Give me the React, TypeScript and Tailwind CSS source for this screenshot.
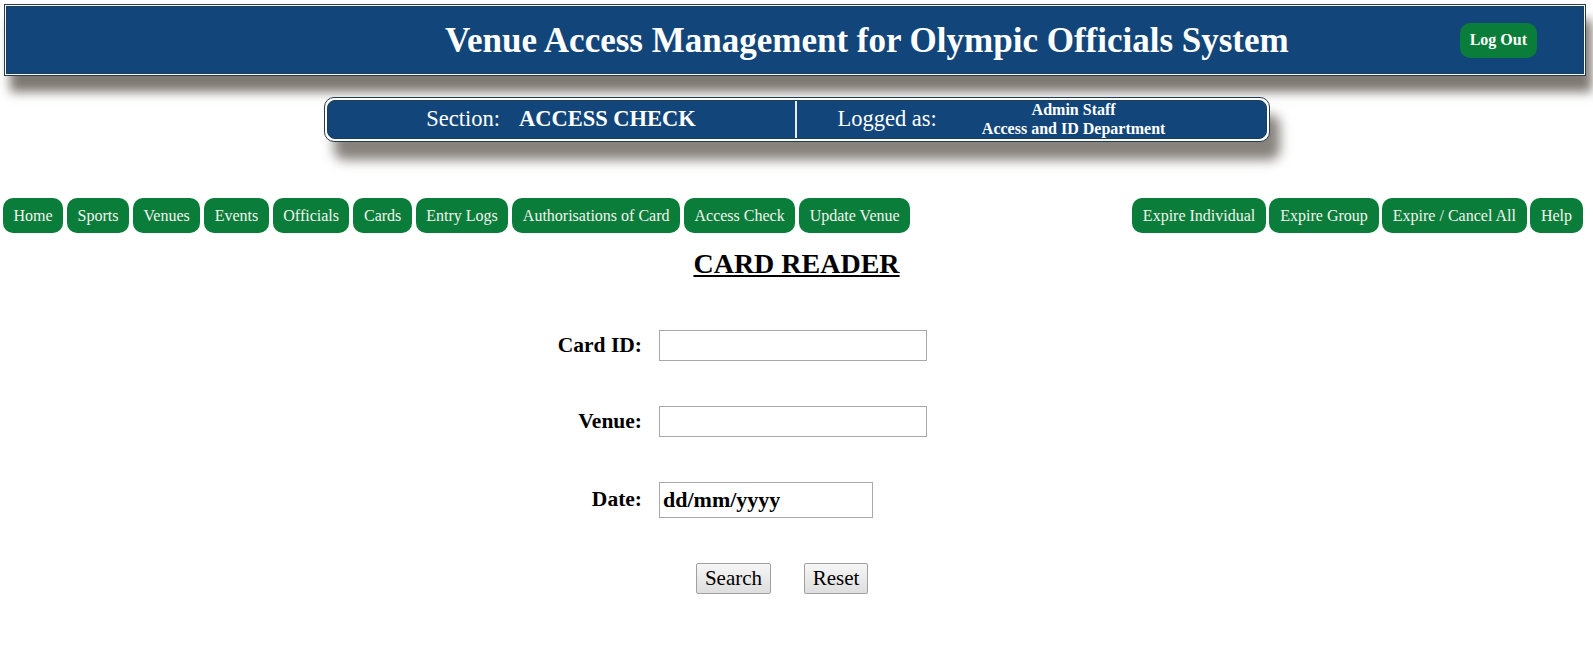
import React from "react";

const leftNav = ["Home", "Sports", "Venues", "Events", "Officials", "Cards", "Entry Logs", "Authorisations of Card", "Access Check", "Update Venue"];
const rightNav = ["Expire Individual", "Expire Group", "Expire / Cancel All", "Help"];

function NavButton({ label, wide }: { label: string; wide?: boolean }) {
  return (
    <button
      className={
        wide
          ? "h-[35px] px-[11px] rounded-[10px] bg-[#0b7d3b] text-[#f4f4ee] text-[16px] leading-none whitespace-nowrap"
          : "h-[35px] px-[10.5px] rounded-[10px] bg-[#0b7d3b] text-[#f4f4ee] text-[16px] leading-none whitespace-nowrap"
      }
    >
      {label}
    </button>
  );
}

export default function App() {
  return (
    <div className="min-h-[647px] bg-white font-['Liberation_Serif',serif] text-black pt-[4px]">
      {/* Header */}
      <div className="ml-[4px] mr-[7px] h-[72px] border border-[#1f3d55] bg-white p-[1px] shadow-[6px_16px_10px_rgba(95,88,80,0.8)]">
        <div className="h-full border border-[#1f3d55] bg-[#12467a] flex items-center">
          <div className="flex-1 text-center pl-[312px] text-white font-bold text-[35px] leading-none whitespace-nowrap">
            Venue Access Management for Olympic Officials System
          </div>
          <button className="h-[35px] px-[10px] mr-[46px] ml-[45px] rounded-[10px] bg-[#0b7d3b] text-white font-bold text-[16px] leading-none whitespace-nowrap">
            Log Out
          </button>
        </div>
      </div>

      {/* Section bar */}
      <div className="mt-[21px] mx-auto w-[946px] h-[45px] rounded-[10px] border border-[#1f3d55] bg-white p-[2px] shadow-[10px_18px_12px_rgba(95,88,80,0.75)]">
        <div className="h-full rounded-[8px] border border-[#1f3d55] bg-[#12467a] grid grid-cols-2 text-white">
          <div className="flex items-center justify-center border-r-2 border-[#e6ecf2] text-[22.5px] leading-none">
            <span>Section:</span>
            <span className="ml-[19px] font-bold">ACCESS CHECK</span>
          </div>
          <div className="flex items-center pl-[41px]">
            <span className="text-[22.5px] leading-none">Logged as:</span>
            <div className="ml-[45px] -mt-[1px] flex flex-col items-center font-bold text-[16px] leading-[19px]">
              <span>Admin Staff</span>
              <span>Access and ID Department</span>
            </div>
          </div>
        </div>
      </div>

      {/* Navigation */}
      <div className="mt-[56px] flex justify-between pl-[3px] pr-[10px]">
        <div className="flex gap-[4px]">
          {leftNav.map((l) => (
            <NavButton key={l} label={l} />
          ))}
        </div>
        <div className="flex gap-[3px]">
          {rightNav.map((l) => (
            <NavButton key={l} label={l} wide />
          ))}
        </div>
      </div>

      {/* Heading */}
      <h1 className="mt-[15px] text-center font-bold text-[28px] leading-[32px] underline underline-offset-[2px] decoration-[2px]">
        CARD READER
      </h1>

      {/* Form */}
      <div className="mx-auto w-[513px] mt-[50px] flex flex-col gap-[45px]">
        <div className="flex items-center">
          <label className="w-[102px] text-right font-bold text-[21.5px] leading-none">Card ID:</label>
          <input className="ml-[17px] w-[268px] h-[31px] border border-[#a9a9a9] bg-white px-[3px] outline-none" />
        </div>
        <div className="flex items-center">
          <label className="w-[102px] text-right font-bold text-[21.5px] leading-none">Venue:</label>
          <input className="ml-[17px] w-[268px] h-[31px] border border-[#a9a9a9] bg-white px-[3px] outline-none" />
        </div>
        <div className="flex items-center">
          <label className="w-[102px] text-right font-bold text-[21.5px] leading-none">Date:</label>
          <input
            defaultValue="dd/mm/yyyy"
            className="ml-[17px] w-[214px] h-[36px] border border-[#a9a9a9] bg-white px-[3px] outline-none font-bold text-[22px] text-black font-['Liberation_Serif',serif]"
          />
        </div>
        <div className="flex items-center pl-[156px] gap-[33px]">
          <button className="w-[75px] h-[31px] border border-[#a0a0a0] rounded-[2px] bg-gradient-to-b from-[#f6f6f6] to-[#dedede] text-[21px] leading-none">
            Search
          </button>
          <button className="w-[64px] h-[31px] border border-[#a0a0a0] rounded-[2px] bg-gradient-to-b from-[#f6f6f6] to-[#dedede] text-[21px] leading-none">
            Reset
          </button>
        </div>
      </div>
    </div>
  );
}
